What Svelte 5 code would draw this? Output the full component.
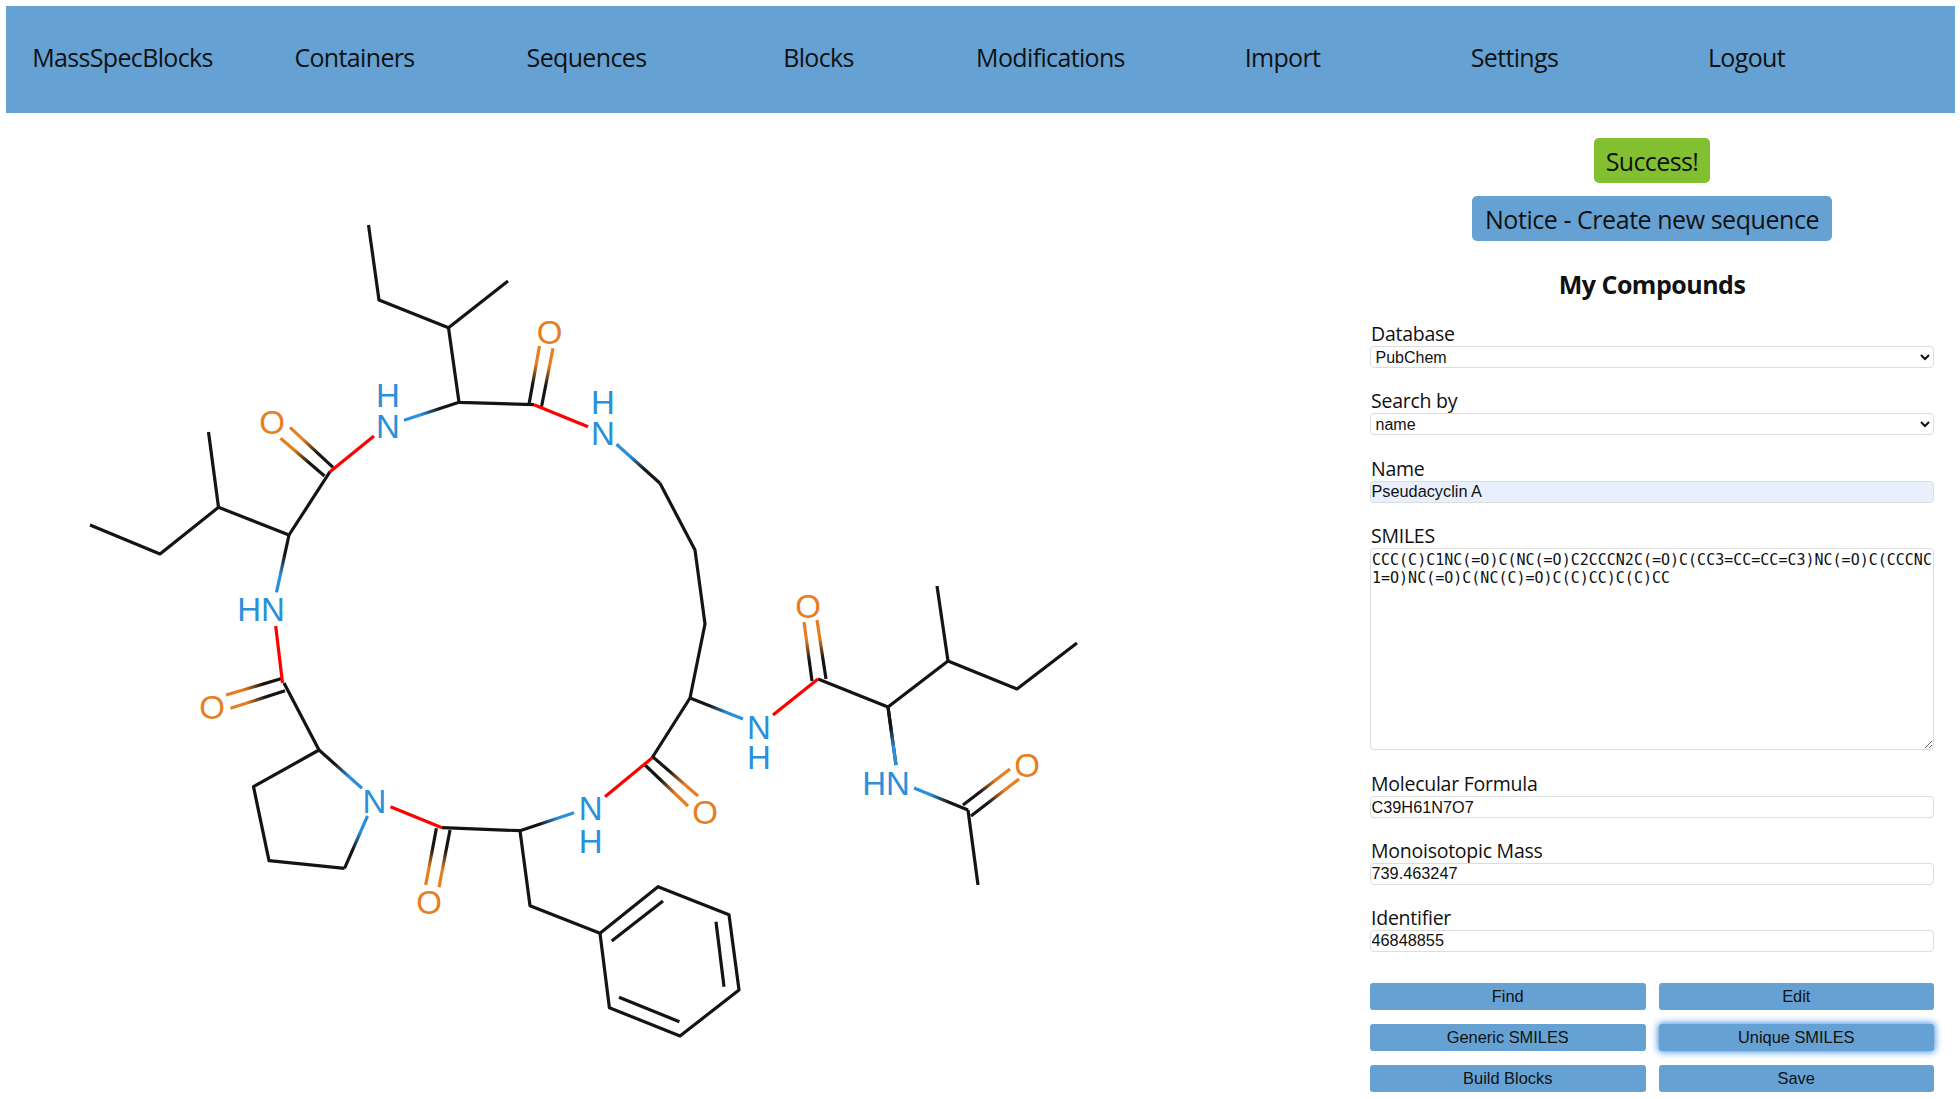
<script>
  const nav = ['MassSpecBlocks','Containers','Sequences','Blocks','Modifications','Import','Settings','Logout'];
  const K = '#141414', B = '#2b90d9', O = '#e67e22', R = '#ff0000';
  const black = [
    '368.5,225 379,300 448.5,327.7 459,402.3 534,404.7',
    '508,281 448.5,327.7',
    '330,471.7 289,535 218.5,507.3 160,554 90,525',
    '218.5,507.3 208.5,432',
    '660,483.3 695,550 705,624 690,698 652,758',
    '284,683 319,750 253.5,786.7 269,860.7 344.5,868.3',
    '442,827.7 520,830.7 530,905.7 600,933.3 658,886.7 729,914.7 739,990 680,1036 609.4,1007.7 600,933.3',
    '611.7,941 663,901','716,921.7 724,986.7','619,997.3 679.4,1021.7',
    '818,679 888,707 948,661 1017,689 1077,643',
    '948,661 937,586','888,707 896,765','968,810 978,885'
  ];
  const bonds = [
    [404,420.3,459,402.3,B,K],[276.5,592.3,289,535,B,K],[616.5,444.3,660,483.3,B,K],
    [362,788.3,319,750,B,K],[367.5,816,344.5,868.3,B,K],[574,812.7,520,830.7,B,K],
    [743,719,690,698,B,K],[896,765,888,707,B,K],[914,788,968,810,B,K],
    [290,427.3,333,467.3,O,K],[280.5,438.3,324.5,476,O,K],
    [539.5,346,529,404.3,O,K],[553,348.3,541.5,406.7,O,K],
    [226,695,282.5,678.3,O,K],[230.5,708.3,285,690.7,O,K],
    [425.7,885,436.4,828.3,O,K],[439,887.3,450,830,O,K],
    [688,806,645,765,O,K],[698,796,653,757,O,K],
    [804,622,812,681,O,K],[817,620,826,679,O,K],
    [1010,769,963,805,O,K],[1019,779,971,816,O,K],
    [374,436,330,471.7,R,R],[588,426.7,534,404.7,R,R],[275.7,626,282.5,683,R,R],
    [390.5,806.7,442,827.7,R,R],[605,796.7,652,758,R,R],[773,715,818,679,R,R]
  ];
  const atoms = [
    ['N',388,426,B],['H',388,395,B],['N',603,433,B],['H',603,402,B],['HN',261,609,B],
    ['N',374.4,801,B],['N',590.6,808,B],['H',590.6,841,B],['N',759,727,B],['H',759,757,B],['HN',886,783,B],
    ['O',272,422,O],['O',549.5,332,O],['O',212,707,O],['O',429,902,O],['O',705,812,O],['O',808,606,O],['O',1027,765,O]
  ];
  const smiles = 'CCC(C)C1NC(=O)C(NC(=O)C2CCCN2C(=O)C(CC3=CC=CC=C3)NC(=O)C(CCCNC1=O)NC(=O)C(NC(C)=O)C(C)CC)C(C)CC';
  const buttons = ['Find','Edit','Generic SMILES','Unique SMILES','Build Blocks','Save'];
</script>

<div class="page">
  <nav class="nav">
    {#each nav as item}
      <a class="nav-item" href="#top">{item}</a>
    {/each}
  </nav>

  <main class="main">
    <div class="canvas">
      <svg class="mol" width="1370" height="986" viewBox="0 113 1370 986">
        <defs>
          {#each bonds as b, i}
            <linearGradient id={'g' + i} gradientUnits="userSpaceOnUse" x1={b[0]} y1={b[1]} x2={b[2]} y2={b[3]}>
              <stop offset="0.3" stop-color={b[4]} />
              <stop offset="0.65" stop-color={b[5]} />
            </linearGradient>
          {/each}
        </defs>
        {#each black as p}
          <polyline points={p} class="bond" />
        {/each}
        {#each bonds as b, i}
          <path d={`M${b[0]} ${b[1]}L${b[2]} ${b[3]}`} class="bond" style={`stroke:url(#g${i})`} />
        {/each}
        {#each atoms as a}
          <text x={a[1]} y={a[2] + 12} fill={a[3]} class="atom">{a[0]}</text>
        {/each}
      </svg>
    </div>

    <aside class="panel">
      <div class="alerts">
        <div class="alert success">Success!</div>
        <div class="alert notice">Notice - Create new sequence</div>
      </div>
      <h2 class="title">My Compounds</h2>

      <div class="field">
        <label for="db">Database</label>
        <select id="db" class="control"><option>PubChem</option></select>
      </div>
      <div class="field">
        <label for="by">Search by</label>
        <select id="by" class="control"><option>name</option></select>
      </div>
      <div class="field">
        <label for="nm">Name</label>
        <input id="nm" class="control filled" value="Pseudacyclin A" />
      </div>
      <div class="field wide">
        <label for="sm">SMILES</label>
        <textarea id="sm" class="smiles" spellcheck="false">{smiles}</textarea>
      </div>
      <div class="field tight">
        <label for="mf">Molecular Formula</label>
        <input id="mf" class="control" value="C39H61N7O7" />
      </div>
      <div class="field tight">
        <label for="mm">Monoisotopic Mass</label>
        <input id="mm" class="control" value="739.463247" />
      </div>
      <div class="field tight">
        <label for="id">Identifier</label>
        <input id="id" class="control" value="46848855" />
      </div>

      <div class="buttons">
        {#each buttons as b}
          <button class="btn" class:focus={b === 'Unique SMILES'}>{b}</button>
        {/each}
      </div>
    </aside>
  </main>
</div>

<style>
  :global(body) { margin: 0; background: #fff; overflow: hidden; }
  .page { padding: 6px 5px 0 6px; color: #111; font-family: "Open Sans", sans-serif; }
  .nav { display: grid; grid-template-columns: repeat(8, 232px); height: 107px; align-items: center; background: #65a2d3; }
  .nav-item { text-align: center; font-size: 25px; letter-spacing: -0.65px; color: #111; text-decoration: none; padding: 0 0 6px 1px; }
  .main { display: flex; }
  .canvas { width: 1364px; flex: none; margin-left: -6px; }
  .mol { display: block; }
  .bond { fill: none; stroke: #141414; stroke-width: 3.2; stroke-linejoin: round; }
  .atom { font-family: "Liberation Sans", sans-serif; font-size: 33px; text-anchor: middle; }
  .panel { width: 564px; padding-top: 25px; flex: none; margin-left: 6px; }
  .alerts { display: flex; flex-direction: column; align-items: center; gap: 13px; }
  .alert { height: 45px; line-height: 47px; padding: 0 13px; border-radius: 5px; font-size: 25px; letter-spacing: -0.45px; }
  .success { background: #82c032; padding: 0 12px; letter-spacing: -0.6px; }
  .notice { background: #65a2d3; }
  .title { margin: 28px 0 23px; font-size: 25px; line-height: 30px; text-align: center; letter-spacing: -0.5px; font-weight: 700; }
  .field { margin-bottom: 21.4px; }
  .field label { display: block; height: 24px; line-height: 24px; font-size: 19.5px; letter-spacing: -0.25px; padding-left: 1px; }
  .control { display: block; box-sizing: border-box; width: 100%; height: 22px; padding: 0 0 0 0.5px; border: 1.5px solid #ddd; border-radius: 4px; background: #fff; font-family: "Liberation Sans", sans-serif; font-size: 16.3px; color: #111; outline: none; }
  select.control { font-size: 16px; }
  .filled { background: #e8f0fe; }
  .smiles { display: block; box-sizing: border-box; width: 100%; height: 202px; padding: 1.5px 0 0 1px; border: 1.5px solid #ddd; border-radius: 4px; font-family: "DejaVu Sans Mono", monospace; font-size: 15px; line-height: 18.5px; color: #111; word-break: break-all; outline: none; }
  .wide { margin-bottom: 22px; }
  .tight { margin-bottom: 20.8px; }
  .buttons { display: grid; grid-template-columns: 1fr 1fr; column-gap: 13px; row-gap: 14px; margin-top: 31.5px; }
  .btn { height: 27px; padding: 0; border: 0; border-radius: 3px; background: #65a2d3; font-family: "Liberation Sans", sans-serif; font-size: 16.4px; color: #111; }
  .focus { box-shadow: 0 0 7px 1px #3f8fe8; }
</style>
